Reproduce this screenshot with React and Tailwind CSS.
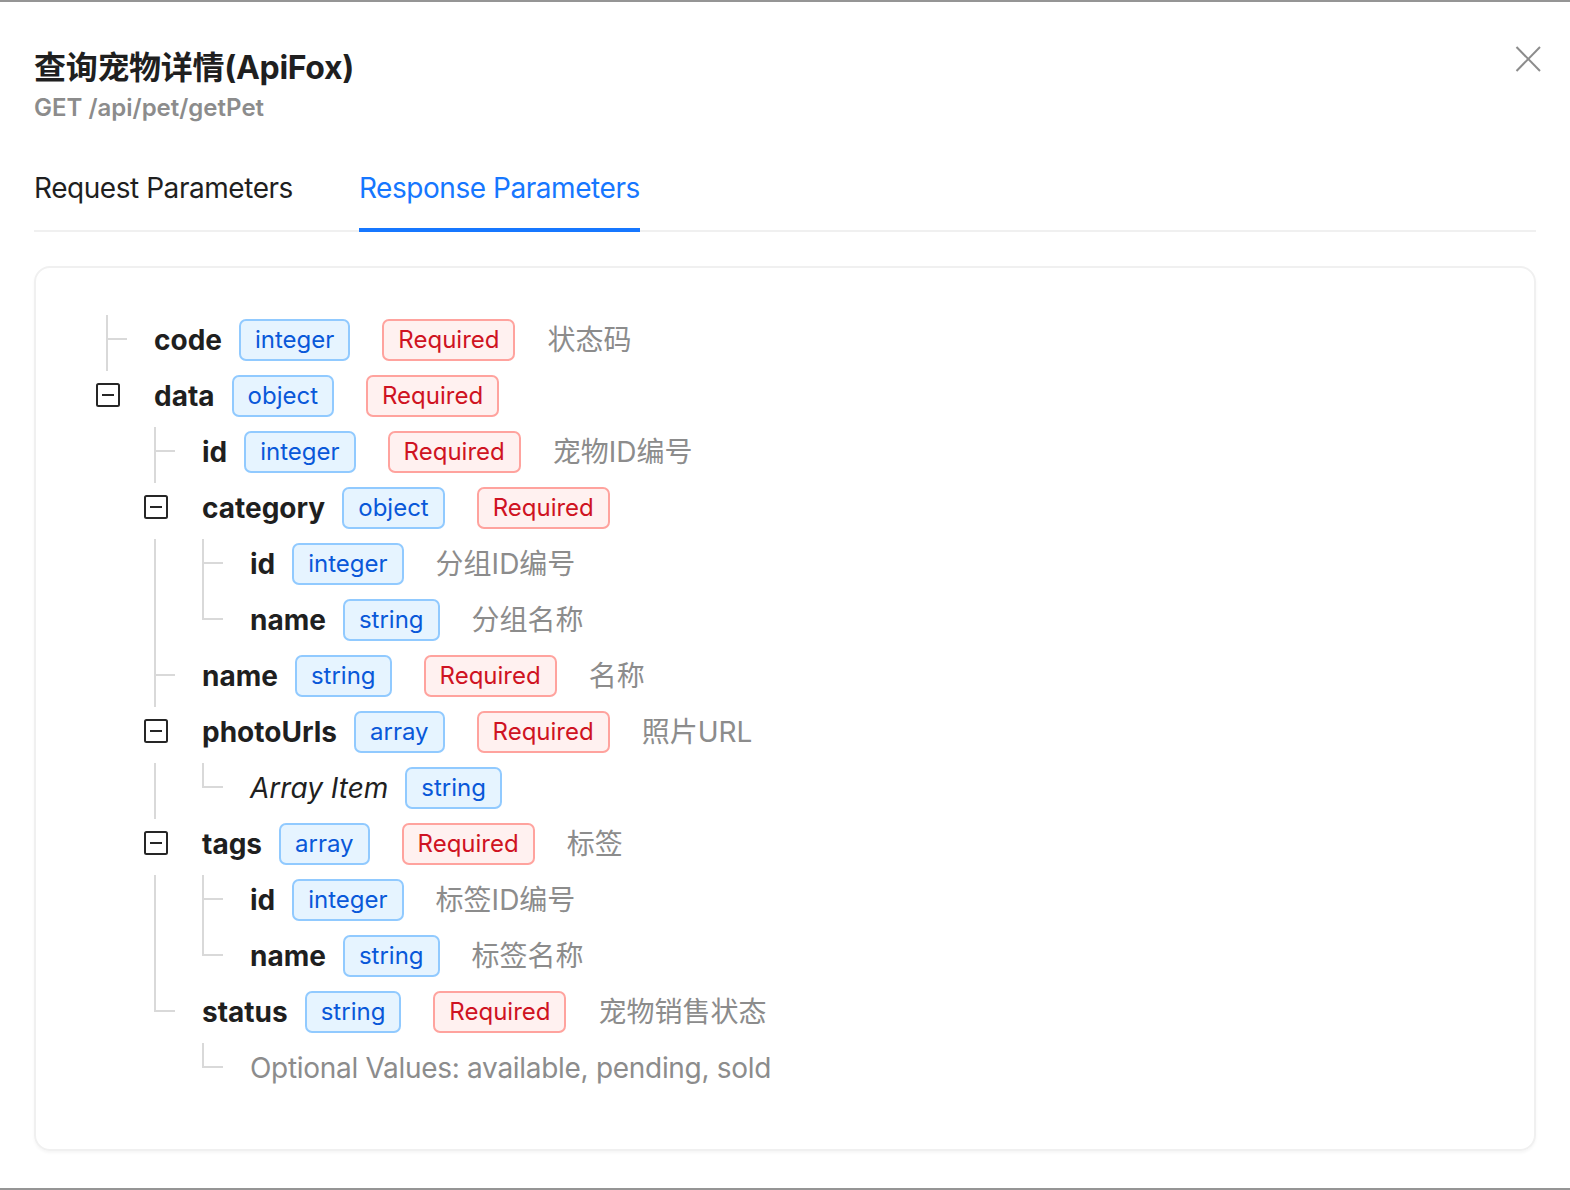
import React from "react";

const rows = [
  { name: "code", type: "integer", req: true, desc: "状态码", guides: [], conn: "tee" },
  { name: "data", type: "object", req: true, guides: [], conn: "box" },
  { name: "id", type: "integer", req: true, desc: "宠物ID编号", guides: [false], conn: "tee" },
  { name: "category", type: "object", req: true, guides: [false], conn: "box" },
  { name: "id", type: "integer", desc: "分组ID编号", guides: [false, true], conn: "tee" },
  { name: "name", type: "string", desc: "分组名称", guides: [false, true], conn: "end" },
  { name: "name", type: "string", req: true, desc: "名称", guides: [false], conn: "tee" },
  { name: "photoUrls", type: "array", req: true, desc: "照片URL", guides: [false], conn: "box" },
  { name: "Array Item", italic: true, type: "string", guides: [false, true], conn: "end" },
  { name: "tags", type: "array", req: true, desc: "标签", guides: [false], conn: "box" },
  { name: "id", type: "integer", desc: "标签ID编号", guides: [false, true], conn: "tee" },
  { name: "name", type: "string", desc: "标签名称", guides: [false, true], conn: "end" },
  { name: "status", type: "string", req: true, desc: "宠物销售状态", guides: [false], conn: "end" },
  { note: "Optional Values: available, pending, sold", guides: [false, false], conn: "end" },
];

function Col({ kind }) {
  const c = "#d9d9d9";
  return (
    <svg width="48" height="56" className="shrink-0 block" viewBox="0 0 48 56">
      {kind === "guide" && <line x1="24" y1="0" x2="24" y2="56" stroke={c} strokeWidth="2" />}
      {kind === "tee" && (
        <>
          <line x1="24" y1="0" x2="24" y2="56" stroke={c} strokeWidth="2" />
          <line x1="24" y1="24" x2="44" y2="24" stroke={c} strokeWidth="2" />
        </>
      )}
      {kind === "end" && (
        <>
          <line x1="24" y1="0" x2="24" y2="25" stroke={c} strokeWidth="2" />
          <line x1="23" y1="24" x2="44" y2="24" stroke={c} strokeWidth="2" />
        </>
      )}
      {kind === "box" && (
        <>
          <rect x="14" y="13" width="22" height="22" rx="1.5" fill="white" stroke="#262626" strokeWidth="2" />
          <line x1="19" y1="24" x2="31" y2="24" stroke="#262626" strokeWidth="2" />
        </>
      )}
    </svg>
  );
}

function TypeTag({ children }) {
  return (
    <span className="inline-flex items-center h-[42px] px-[14px] rounded-[7px] border-2 border-[#91caff] bg-[#e6f4ff] text-[#0958d9] text-[24px] leading-none">
      {children}
    </span>
  );
}

function ReqTag() {
  return (
    <span className="inline-flex items-center h-[42px] px-[14px] rounded-[7px] border-2 border-[#ffa39e] bg-[#fff1f0] text-[#cf1322] text-[24px] leading-none">
      Required
    </span>
  );
}

function Row({ r }) {
  return (
    <div className="flex h-[56px]">
      {r.guides.map((g, i) => (
        <Col key={i} kind={g ? "guide" : "none"} />
      ))}
      <Col kind={r.conn} />
      <div className="flex items-center h-[50px] ml-[23px]">
        {r.note ? (
          <span className="text-[28px] tracking-[-0.3px] text-[#8c8c8c]">{r.note}</span>
        ) : (
          <>
            <span
              className={
                r.italic
                  ? "text-[28px] italic font-normal text-[#1f1f1f] mr-[17px]"
                  : "text-[28px] font-bold text-[#1f1f1f] mr-[17px]"
              }
            >
              {r.name}
            </span>
            <span className="mr-[32px] flex">
              <TypeTag>{r.type}</TypeTag>
            </span>
            {r.req && (
              <span className="mr-[32px] flex">
                <ReqTag />
              </span>
            )}
            {r.desc && <span className="text-[28px] text-[#8c8c8c]">{r.desc}</span>}
          </>
        )}
      </div>
    </div>
  );
}

export default function App() {
  return (
    <div className="relative w-[1570px] h-[1190px] bg-white border-t-2 border-b-2 border-[#959595] px-[34px] font-[family-name:Inter,'Noto_Sans_CJK_SC',sans-serif] overflow-hidden">
      <button className="absolute top-[44px] right-[29px] w-[26px] h-[26px] flex items-center justify-center">
        <svg width="26" height="26" viewBox="0 0 26 26">
          <line x1="1.5" y1="1" x2="25" y2="25" stroke="#8c8c8c" strokeWidth="2" />
          <line x1="25" y1="1" x2="1.5" y2="25" stroke="#8c8c8c" strokeWidth="2" />
        </svg>
      </button>
      <div className="pt-[42px]">
        <div className="text-[32px] leading-[48px] font-bold tracking-[-0.3px] text-[#1f1f1f]">查询宠物详情(ApiFox)</div>
        <div className="text-[24px] leading-[32px] font-semibold text-[#8c8c8c]">GET /api/pet/getPet</div>
      </div>
      <div className="mt-[18px] flex gap-[66px] border-b-2 border-[#f0f0f0]">
        <div className="pt-[24px] pb-[20px] text-[28px] leading-[44px] tracking-[-0.45px] text-[#1f1f1f]">Request Parameters</div>
        <div className="relative pt-[24px] pb-[20px] text-[28px] leading-[44px] tracking-[-0.45px] text-[#1677ff]">
          Response Parameters
          <div className="absolute left-0 right-0 bottom-[-2px] h-[4px] bg-[#1677ff]" />
        </div>
      </div>
      <div className="mt-[34px] border-2 border-[#f0f0f0] rounded-[16px] pl-[47px] pt-[47px] pb-[50px] shadow-[0_2px_3px_rgba(0,0,0,0.04)]">
        {rows.map((r, i) => (
          <Row key={i} r={r} />
        ))}
      </div>
    </div>
  );
}
